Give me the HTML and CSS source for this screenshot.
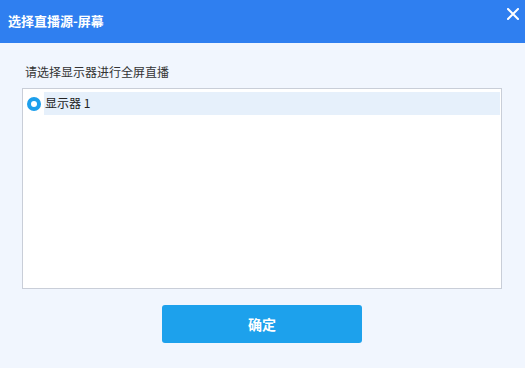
FILE: index.html
```html
<!DOCTYPE html>
<html>
<head>
<meta charset="utf-8">
<link rel="stylesheet" href="styles.css">
</head>
<body>
<div class="dialog">
  <div class="titlebar">
    <span class="title">选择直播源-屏幕</span>
    <svg class="close" width="12" height="12" viewBox="0 0 12 12"><path d="M1 1L11 11M11 1L1 11" stroke="#fff" stroke-width="2" stroke-linecap="square"/></svg>
  </div>
  <div class="body">
    <div class="label">请选择显示器进行全屏直播</div>
    <div class="list">
      <div class="row">
        <span class="radio"><span class="dot"></span></span>
        <span class="item">显示器 1</span>
      </div>
    </div>
    <div class="actions">
      <button class="ok">确定</button>
    </div>
  </div>
</div>
</body>
</html>
```
FILE: styles.css
```css
html, body { margin: 0; padding: 0; }
body {
  width: 525px; height: 368px; overflow: hidden;
  font-family: "Noto Sans CJK SC", "Noto Sans", sans-serif;
  background: #f1f6fe;
}
.dialog { width: 525px; height: 368px; display: flex; flex-direction: column; }
.titlebar {
  height: 43px; background: #2f7ff0;
  display: flex; align-items: center; justify-content: space-between;
  padding: 0 6px 0 8px; box-sizing: border-box;
}
.title { color: #fff; font-size: 13px; font-weight: bold; margin-top: -3px; }
.close { align-self: flex-start; margin-top: 8px; }
.body { flex: 1; padding: 0 23px 0 22px; display: flex; flex-direction: column; }
.label { font-size: 12px; color: #333; margin: 20px 0 0 3px; line-height: 18px; height: 25px; }
.list {
  height: 201px; box-sizing: border-box; background: #fff;
  border: 1px solid #c9ced8; padding: 3px 1px 0 4px;
}
.row { display: flex; align-items: center; height: 23px; }
.radio {
  width: 14px; height: 14px; border-radius: 50%; background: #1d9fec;
  display: flex; align-items: center; justify-content: center; flex: none;
}
.dot { width: 6px; height: 6px; border-radius: 50%; background: #fff; }
.item {
  flex: 1; height: 23px; line-height: 22px; margin-left: 3px; padding-left: 1px;
  background: #e6f0fb; font-size: 12px; color: #222;
}
.actions { display: flex; justify-content: center; margin-top: 16px; }
.ok {
  width: 200px; height: 38px; border: none; border-radius: 3px;
  background: #1da1ec; color: #fff; font-size: 14px; font-weight: bold;
  font-family: inherit; padding: 0;
}
```
